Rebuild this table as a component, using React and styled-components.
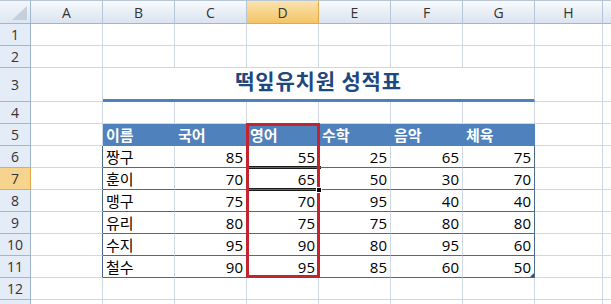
import React from 'react';
import styled, { createGlobalStyle, css } from 'styled-components';

const GRID = '#d0d7e5';
const HEAD_LINE = '#9eb6ce';
const TABLE_LINE = '#4d6a8a';
const BLUE = '#4f81bd';

const GlobalStyle = createGlobalStyle`
    html, body {
        margin: 0;
        padding: 0;
        background: #fff;
        overflow: hidden;
    }
    body {
        font-family: 'Open Sans', 'Noto Sans CJK KR', sans-serif;
        color: #000;
    }
`;

const COLS = ['A', 'B', 'C', 'D', 'E', 'F', 'G', 'H', 'I'];
const SUBJECTS = ['이름', '국어', '영어', '수학', '음악', '체육'];
const SCORES = [
    ['짱구', 85, 55, 25, 65, 75],
    ['훈이', 70, 65, 50, 30, 70],
    ['맹구', 75, 70, 95, 40, 40],
    ['유리', 80, 75, 75, 80, 80],
    ['수지', 95, 90, 80, 95, 60],
    ['철수', 90, 95, 85, 60, 50],
];

const Sheet = styled.div`
    position: relative;
    display: grid;
    grid-template-columns: 31px repeat(7, 72px) 68px 72px;
    grid-template-rows: 24px 22px 22px 34px repeat(10, 22px);
    width: max-content;
`;

const Corner = styled.div`
    position: relative;
    box-sizing: border-box;
    background: linear-gradient(#f3f7fb, #dde6f1);
    border-right: 1px solid ${HEAD_LINE};
    border-bottom: 1px solid ${HEAD_LINE};
    border-top: 1px solid #b8c6d6;

    &::after {
        content: '';
        position: absolute;
        right: 3px;
        bottom: 3px;
        border-left: 15px solid transparent;
        border-bottom: 14px solid #c6d0dc;
    }
`;

const ColHead = styled.div`
    box-sizing: border-box;
    display: flex;
    align-items: center;
    justify-content: center;
    font-size: 14px;
    color: #333;
    border-top: 1px solid #b8c6d6;
    border-right: 1px solid #b5c5d8;
    border-bottom: 1px solid ${HEAD_LINE};
    background: linear-gradient(#f8fafd, #dae3ef);
    ${p => p.$selected && css`
        background: linear-gradient(#fbe2b0, #f3c565);
        border-right-color: #e2a84a;
        border-bottom-color: #e2a84a;
    `}
`;

const RowHead = styled.div`
    box-sizing: border-box;
    display: flex;
    align-items: center;
    justify-content: center;
    font-size: 14px;
    color: #333;
    background: ${p => (p.$selected ? '#f7d48e' : '#e4ecf7')};
    border-right: 1px solid ${p => (p.$selected ? '#e2a84a' : HEAD_LINE)};
    border-bottom: 1px solid ${HEAD_LINE};
`;

const Cell = styled.div`
    box-sizing: border-box;
    display: flex;
    align-items: center;
    justify-content: ${p => (p.$align === 'right' ? 'flex-end' : 'flex-start')};
    padding: 0 3px;
    font-size: 15px;
    white-space: nowrap;
    background: ${p => p.$fill || '#fff'};
    color: ${p => (p.$head ? '#fff' : '#000')};
    font-weight: ${p => (p.$head ? 700 : 400)};
    border-right: 1px solid ${p => p.$rb || GRID};
    border-bottom: 1px solid ${p => p.$bb || GRID};
`;

const TitleCell = styled.div`
    grid-column: span 6;
    box-sizing: border-box;
    display: flex;
    align-items: flex-end;
    justify-content: center;
    padding-bottom: 4px;
    font-family: 'Noto Sans CJK KR', sans-serif;
    font-size: 21px;
    letter-spacing: 0.8px;
    font-weight: 700;
    color: #1f497d;
    border-right: 1px solid ${GRID};
    border-bottom: 3px solid ${BLUE};
`;

const ActiveCell = styled.div`
    position: absolute;
    left: 246px;
    top: 166px;
    width: 75px;
    height: 25px;
    box-sizing: border-box;
    border-top: 3px double #1a1a1a;
    border-bottom: 3px double #1a1a1a;
`;

const Highlight = styled.div`
    position: absolute;
    left: 246px;
    top: 123px;
    width: 74px;
    height: 155px;
    box-sizing: border-box;
    border: 3px solid #c3242d;
`;

const FillHandle = styled.div`
    position: absolute;
    left: 316px;
    top: 187px;
    width: 6px;
    height: 6px;
    box-sizing: border-box;
    background: #000;
    border: 1px solid #fff;
`;

const ResizeMark = styled.div`
    position: absolute;
    left: 530px;
    top: 273px;
    width: 0;
    height: 0;
    border-left: 4px solid transparent;
    border-bottom: 4px solid #2d4f7c;
`;

const cellProps = (r, c) => {
    const inTable = c >= 1 && c <= 6;
    if (r === 5 && inTable) {
        return { $fill: BLUE, $rb: BLUE, $bb: BLUE, $head: true };
    }
    if (r >= 6 && r <= 11) {
        if (inTable) return { $bb: TABLE_LINE, $rb: c === 6 ? TABLE_LINE : GRID };
        if (c === 0) return { $rb: TABLE_LINE };
    }
    return {};
};

const cellText = (r, c) => {
    if (c < 1 || c > 6) return null;
    if (r === 5) return SUBJECTS[c - 1];
    if (r >= 6 && r <= 11) return SCORES[r - 6][c - 1];
    return null;
};

const App = () => {
    const rows = Array.from({ length: 13 }, (_, i) => i + 1);

    return (
        <>
            <GlobalStyle />
            <Sheet>
                <Corner />
                {COLS.map(col => (
                    <ColHead key={col} $selected={col === 'D'}>{col}</ColHead>
                ))}

                {rows.map(r => (
                    <React.Fragment key={r}>
                        <RowHead $selected={r === 7}>{r}</RowHead>
                        {r === 3 ? (
                            <>
                                <Cell />
                                <TitleCell>떡잎유치원 성적표</TitleCell>
                                <Cell />
                                <Cell />
                            </>
                        ) : (
                            COLS.map((col, c) => {
                                const text = cellText(r, c);
                                return (
                                    <Cell
                                        key={col}
                                        {...cellProps(r, c)}
                                        $align={typeof text === 'number' ? 'right' : 'left'}
                                    >
                                        {text}
                                    </Cell>
                                );
                            })
                        )}
                    </React.Fragment>
                ))}

                <ActiveCell />
                <Highlight />
                <FillHandle />
                <ResizeMark />
            </Sheet>
        </>
    );
};

export default App;
